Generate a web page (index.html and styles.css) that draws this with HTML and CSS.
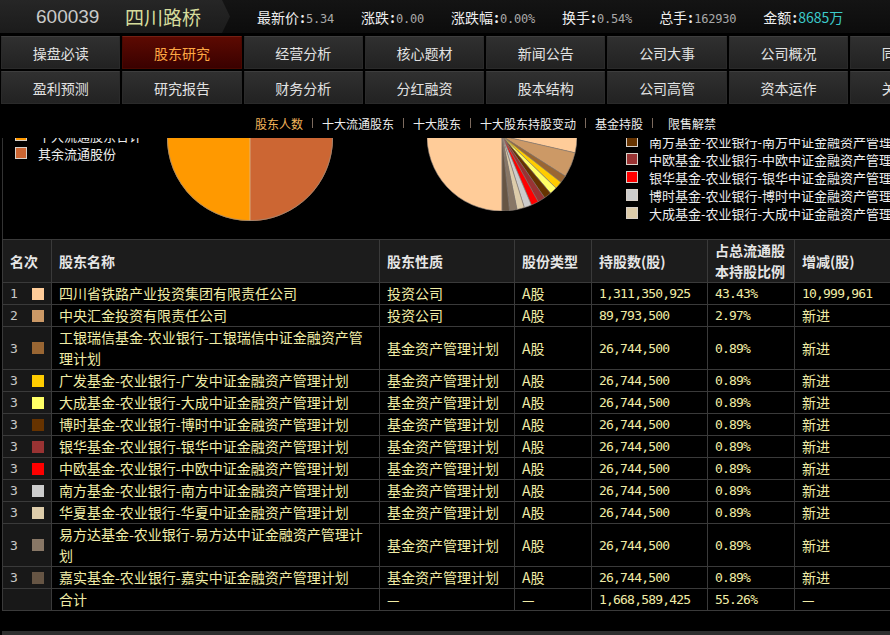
FILE: index.html
```html
<!DOCTYPE html>
<html lang="zh-CN">
<head>
<meta charset="utf-8">
<title>四川路桥 股东研究</title>
<link rel="stylesheet" href="styles.css">
</head>
<body>
<div class="page">
  <header class="quote-bar">
    <div class="stock-title"><span class="code">600039</span><span class="name">四川路桥</span></div>
    <ul class="quotes">
      <li><span class="lbl">最新价<b class="colon">:</b></span><span class="val">5.34</span></li>
      <li><span class="lbl">涨跌<b class="colon">:</b></span><span class="val">0.00</span></li>
      <li><span class="lbl">涨跌幅<b class="colon">:</b></span><span class="val">0.00%</span></li>
      <li><span class="lbl">换手<b class="colon">:</b></span><span class="val">0.54%</span></li>
      <li><span class="lbl">总手<b class="colon">:</b></span><span class="val">162930</span></li>
      <li><span class="lbl">金额<b class="colon">:</b></span><span class="val amount">8685万</span></li>
    </ul>
  </header>

  <nav class="main-nav">
    <a class="tab">操盘必读</a>
    <a class="tab active">股东研究</a>
    <a class="tab">经营分析</a>
    <a class="tab">核心题材</a>
    <a class="tab">新闻公告</a>
    <a class="tab">公司大事</a>
    <a class="tab">公司概况</a>
    <a class="tab">同行比较</a>
    <a class="tab">盈利预测</a>
    <a class="tab">研究报告</a>
    <a class="tab">财务分析</a>
    <a class="tab">分红融资</a>
    <a class="tab">股本结构</a>
    <a class="tab">公司高管</a>
    <a class="tab">资本运作</a>
    <a class="tab">关联个股</a>
  </nav>

  <nav class="sub-nav">
    <a class="sub active">股东人数</a><i class="sep"></i>
    <a class="sub">十大流通股东</a><i class="sep"></i>
    <a class="sub">十大股东</a><i class="sep"></i>
    <a class="sub">十大股东持股变动</a><i class="sep"></i>
    <a class="sub">基金持股</a><i class="sep"></i>
    <a class="sub last">限售解禁</a>
  </nav>

  <section class="charts">
    <div class="charts-inner">
      <div class="chart chart-left">
        <ul class="legend legend-left">
          <li><i class="sq" style="background:#ff9900"></i>十大流通股东合计</li>
          <li><i class="sq" style="background:#cc6633"></i>其余流通股份</li>
        </ul>
        <svg class="pie pie-left" width="166" height="166" viewBox="0 0 166 166">
          <path d="M83,83 L83,166 A83,83 0 1 1 110.02,4.52 Z" fill="#ff9900"/>
          <path d="M83,83 L110.02,4.52 A83,83 0 0 1 83,166 Z" fill="#cc6633"/>
          <line x1="83" y1="83" x2="83" y2="166" stroke="#d8b890" stroke-width="0.8"/>
          <circle cx="83" cy="83" r="82.6" fill="none" stroke="#9a8a7a" stroke-width="0.8"/>
        </svg>
      </div>
      <div class="chart chart-right">
        <svg class="pie pie-right" width="150" height="150" viewBox="0 0 150 150">
          <g stroke="#8a8078" stroke-width="0.6">
            <path d="M75,75 L75,150 A75,75 0 1 1 148.08,91.87 Z" fill="#ffcc99"/>
            <path d="M75,75 L148.08,91.87 A75,75 0 0 1 138.32,115.19 Z" fill="#cc9966"/>
            <path d="M75,75 L138.32,115.19 A75,75 0 0 1 133.97,121.35 Z" fill="#996633"/>
            <path d="M75,75 L133.97,121.35 A75,75 0 0 1 129.03,127.02 Z" fill="#ffcc00"/>
            <path d="M75,75 L129.03,127.02 A75,75 0 0 1 123.53,132.18 Z" fill="#ffff66"/>
            <path d="M75,75 L123.53,132.18 A75,75 0 0 1 117.55,136.76 Z" fill="#663300"/>
            <path d="M75,75 L117.55,136.76 A75,75 0 0 1 111.13,140.72 Z" fill="#993333"/>
            <path d="M75,75 L111.13,140.72 A75,75 0 0 1 104.36,144.02 Z" fill="#ff0000"/>
            <path d="M75,75 L104.36,144.02 A75,75 0 0 1 97.28,146.62 Z" fill="#cccccc"/>
            <path d="M75,75 L97.28,146.62 A75,75 0 0 1 89.98,148.49 Z" fill="#ddccaa"/>
            <path d="M75,75 L89.98,148.49 A75,75 0 0 1 82.53,149.62 Z" fill="#887766"/>
            <path d="M75,75 L82.53,149.62 A75,75 0 0 1 75,150 Z" fill="#665544"/>
          </g>
        </svg>
        <ul class="legend legend-right">
          <li><i class="sq" style="background:#663300"></i>南方基金-农业银行-南方中证金融资产管理计划</li>
          <li><i class="sq" style="background:#993333"></i>中欧基金-农业银行-中欧中证金融资产管理计划</li>
          <li><i class="sq" style="background:#ff0000"></i>银华基金-农业银行-银华中证金融资产管理计划</li>
          <li><i class="sq" style="background:#cccccc"></i>博时基金-农业银行-博时中证金融资产管理计划</li>
          <li><i class="sq" style="background:#ddccaa"></i>大成基金-农业银行-大成中证金融资产管理计划</li>
        </ul>
      </div>
    </div>
  </section>

  <table class="holders">
    <thead>
      <tr>
        <th class="c-rank">名次</th>
        <th class="c-name">股东名称</th>
        <th class="c-kind">股东性质</th>
        <th class="c-type">股份类型</th>
        <th class="c-num">持股数(股)</th>
        <th class="c-pct">占总流通股本持股比例</th>
        <th class="c-chg">增减(股)</th>
      </tr>
    </thead>
    <tbody>
      <tr><td class="rank"><div class="rank-box"><span class="rk">1</span><i class="sw" style="background:#ffcc99"></i></div></td><td class="name">四川省铁路产业投资集团有限责任公司</td><td>投资公司</td><td>A股</td><td class="num">1,311,350,925</td><td class="num">43.43%</td><td class="num">10,999,961</td></tr>
      <tr><td class="rank"><div class="rank-box"><span class="rk">2</span><i class="sw" style="background:#cc9966"></i></div></td><td class="name">中央汇金投资有限责任公司</td><td>投资公司</td><td>A股</td><td class="num">89,793,500</td><td class="num">2.97%</td><td>新进</td></tr>
      <tr><td class="rank"><div class="rank-box"><span class="rk">3</span><i class="sw" style="background:#996633"></i></div></td><td class="name">工银瑞信基金-农业银行-工银瑞信中证金融资产管理计划</td><td>基金资产管理计划</td><td>A股</td><td class="num">26,744,500</td><td class="num">0.89%</td><td>新进</td></tr>
      <tr><td class="rank"><div class="rank-box"><span class="rk">3</span><i class="sw" style="background:#ffcc00"></i></div></td><td class="name">广发基金-农业银行-广发中证金融资产管理计划</td><td>基金资产管理计划</td><td>A股</td><td class="num">26,744,500</td><td class="num">0.89%</td><td>新进</td></tr>
      <tr><td class="rank"><div class="rank-box"><span class="rk">3</span><i class="sw" style="background:#ffff66"></i></div></td><td class="name">大成基金-农业银行-大成中证金融资产管理计划</td><td>基金资产管理计划</td><td>A股</td><td class="num">26,744,500</td><td class="num">0.89%</td><td>新进</td></tr>
      <tr><td class="rank"><div class="rank-box"><span class="rk">3</span><i class="sw" style="background:#663300"></i></div></td><td class="name">博时基金-农业银行-博时中证金融资产管理计划</td><td>基金资产管理计划</td><td>A股</td><td class="num">26,744,500</td><td class="num">0.89%</td><td>新进</td></tr>
      <tr><td class="rank"><div class="rank-box"><span class="rk">3</span><i class="sw" style="background:#993333"></i></div></td><td class="name">银华基金-农业银行-银华中证金融资产管理计划</td><td>基金资产管理计划</td><td>A股</td><td class="num">26,744,500</td><td class="num">0.89%</td><td>新进</td></tr>
      <tr><td class="rank"><div class="rank-box"><span class="rk">3</span><i class="sw" style="background:#ff0000"></i></div></td><td class="name">中欧基金-农业银行-中欧中证金融资产管理计划</td><td>基金资产管理计划</td><td>A股</td><td class="num">26,744,500</td><td class="num">0.89%</td><td>新进</td></tr>
      <tr><td class="rank"><div class="rank-box"><span class="rk">3</span><i class="sw" style="background:#cccccc"></i></div></td><td class="name">南方基金-农业银行-南方中证金融资产管理计划</td><td>基金资产管理计划</td><td>A股</td><td class="num">26,744,500</td><td class="num">0.89%</td><td>新进</td></tr>
      <tr><td class="rank"><div class="rank-box"><span class="rk">3</span><i class="sw" style="background:#ddccaa"></i></div></td><td class="name">华夏基金-农业银行-华夏中证金融资产管理计划</td><td>基金资产管理计划</td><td>A股</td><td class="num">26,744,500</td><td class="num">0.89%</td><td>新进</td></tr>
      <tr><td class="rank"><div class="rank-box"><span class="rk">3</span><i class="sw" style="background:#887766"></i></div></td><td class="name">易方达基金-农业银行-易方达中证金融资产管理计划</td><td>基金资产管理计划</td><td>A股</td><td class="num">26,744,500</td><td class="num">0.89%</td><td>新进</td></tr>
      <tr><td class="rank"><div class="rank-box"><span class="rk">3</span><i class="sw" style="background:#665544"></i></div></td><td class="name">嘉实基金-农业银行-嘉实中证金融资产管理计划</td><td>基金资产管理计划</td><td>A股</td><td class="num">26,744,500</td><td class="num">0.89%</td><td>新进</td></tr>
      <tr><td class="rank"><div class="rank-box"></div></td><td class="name">合计</td><td>—</td><td>—</td><td class="num">1,668,589,425</td><td class="num">55.26%</td><td>—</td></tr>
    </tbody>
  </table>

  <div class="hscroll"></div>
</div>
</body>
</html>
```

FILE: styles.css
```css
html, body {
  margin: 0;
  padding: 0;
  background: #000;
}

body {
  width: 890px;
  height: 635px;
  overflow: hidden;
  font-family: "Noto Sans CJK SC", sans-serif;
  font-size: 14px;
  color: #ddd;
}

.page {
  width: 890px;
}

/* ---------- quote bar ---------- */
.quote-bar {
  display: flex;
  align-items: center;
  height: 33px;
  background: linear-gradient(#141414, #0c0c0c);
  border-bottom: 1px solid #000;
}

.stock-title {
  display: flex;
  align-items: center;
  flex: none;
  width: 230px;
  height: 33px;
  background: linear-gradient(#262626, #1b1b1b);
  clip-path: polygon(0 0, 222px 0, 230px 50%, 222px 100%, 0 100%);
}

.code {
  width: 89px;
  margin-left: 36px;
  font-family: "Liberation Sans", sans-serif;
  font-size: 19px;
  color: #c9c9c9;
}

.name {
  font-size: 19px;
  color: #d6dc9c;
}

.quotes {
  display: flex;
  gap: 27px;
  margin: 0 0 0 27px;
  padding: 0;
  list-style: none;
  white-space: nowrap;
}

.lbl {
  color: #eeeeee;
  font-size: 14px;
}

.colon {
  display: inline-block;
  width: 7px;
  text-align: center;
  font-weight: bold;
  color: #eeeeee;
}

.val {
  font-family: "DejaVu Sans Mono", monospace;
  font-size: 12px;
  letter-spacing: -0.22px;
  color: #a9a9a9;
}

.val.amount {
  font-family: "Noto Sans CJK SC", sans-serif;
  font-size: 14px;
  letter-spacing: 0;
  color: #3ccaca;
}

/* ---------- main nav ---------- */
.main-nav {
  display: grid;
  grid-template-columns: repeat(8, 119.3px);
  grid-auto-rows: 33px;
  column-gap: 2px;
  row-gap: 2px;
  padding: 2px 0 0 1px;
}

.tab {
  display: flex;
  align-items: center;
  justify-content: center;
  box-sizing: border-box;
  border: 1px solid #2a2a2a;
  border-top-color: #3e3e3e;
  background: linear-gradient(#303030, #222222);
  color: #e2e2e2;
  font-size: 14px;
  white-space: nowrap;
}

.tab.active {
  background: linear-gradient(#5c0a02, #3a0100);
  border-color: #4a0800;
  border-top-color: #742014;
  color: #ffa844;
}

/* ---------- sub nav ---------- */
.sub-nav {
  display: flex;
  align-items: center;
  height: 30px;
  padding: 4px 0 0 246px;
  font-size: 12px;
  white-space: nowrap;
}

.sub {
  padding: 0 9px;
  color: #ececec;
}

.sub.active {
  color: #f2b45a;
}

.sub.last {
  padding-left: 15px;
}

.sep {
  width: 1px;
  height: 10px;
  background: #7c6a5e;
}

/* ---------- charts ---------- */
.charts {
  height: 101px;
  overflow: hidden;
  margin-left: 2px;
  border-left: 1px solid #333;
}

.charts-inner {
  display: flex;
  margin-top: -90px;
}

.chart {
  display: flex;
  align-items: flex-start;
  flex: none;
}

.chart-left {
  width: 424px;
}

.legend {
  margin: 0;
  padding: 0;
  list-style: none;
  font-size: 13px;
  color: #eeeeee;
  white-space: nowrap;
}

.legend li {
  display: flex;
  align-items: center;
  height: 18px;
}

.sq {
  width: 12px;
  height: 12px;
  box-sizing: border-box;
  border: 1px solid #d8d0c8;
  margin-right: 11px;
  flex: none;
}

.legend-left {
  width: 164px;
  flex: none;
  box-sizing: border-box;
  padding: 78px 0 0 12px;
}

.pie {
  display: block;
  flex: none;
}

.pie-left {
  margin-top: 7px;
}

.pie-right {
  margin-top: 13px;
}

.legend-right {
  margin-left: 49px;
  padding-top: 84px;
}

/* ---------- table ---------- */
.holders {
  margin-left: 2px;
  width: 904px;
  table-layout: fixed;
  border-collapse: separate;
  border-spacing: 0;
  border-top: 1px solid #3a3a3a;
  border-left: 1px solid #3a3a3a;
}

.holders th,
.holders td {
  box-sizing: border-box;
  padding: 0 0 0 7px;
  border-right: 1px solid #3a3a3a;
  border-bottom: 1px solid #3a3a3a;
  line-height: 21px;
  text-align: left;
  vertical-align: middle;
}

.holders th {
  background: #1c1c1c;
  color: #e6e6e6;
  font-weight: bold;
  font-size: 14px;
}

.holders td {
  background: #000;
  color: #f0eca6;
  font-size: 14px;
}

.c-rank { width: 49px; }
.c-name { width: 328px; }
.c-kind { width: 135px; }
.c-type { width: 77px; }
.c-num  { width: 116px; }
.c-pct  { width: 87px; }
.c-chg  { width: 112px; }

.holders td.name {
  padding-right: 10px;
}

.holders td.rank {
  background: #181818;
}

.rank-box {
  display: flex;
  align-items: center;
  height: 21px;
}

.rk {
  width: 22px;
  font-family: "DejaVu Sans Mono", monospace;
  font-size: 13px;
  line-height: 21px;
  color: #c8c8c8;
}

.sw {
  width: 12px;
  height: 12px;
}

.holders td.num {
  font-family: "DejaVu Sans Mono", monospace;
  font-size: 13px;
  letter-spacing: -0.8px;
}

.hscroll {
  height: 4px;
  margin: 20px 0 0 2px;
  background: #2e2e2e;
}
```
